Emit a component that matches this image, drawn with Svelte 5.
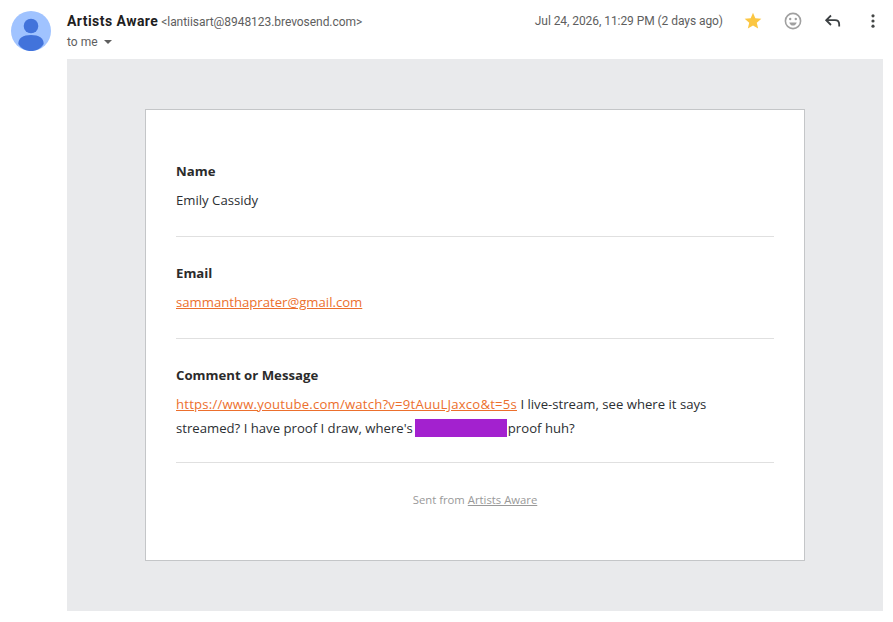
<script>
  const avatarBg = '#a0c3ff';
</script>

<div class="page">
  <header class="head">
    <svg class="avatar" width="40" height="40" viewBox="0 0 40 40" aria-hidden="true">
      <circle cx="20" cy="20" r="20" fill={avatarBg} />
      <circle cx="20" cy="15" r="7.3" fill="#4273db" />
      <path d="M7.3 33 C7.3 27 12 24 20 24 C28 24 32.7 27 32.7 33 C30 37.5 25 40 20 40 C15 40 10 37.5 7.3 33 Z" fill="#4273db" />
    </svg>
    <div class="who">
      <div class="from"><span class="name">Artists Aware</span> <span class="addr">&lt;lantiisart@8948123.brevosend.com&gt;</span></div>
      <div class="to">to me <span class="caret"></span></div>
    </div>
    <div class="date">Jul 24, 2026, 11:29 PM (2 days ago)</div>
    <div class="tools">
      <svg width="20" height="20" viewBox="0 0 24 24" aria-hidden="true"><path fill="#fbc02d" fill-opacity="0.9" d="M12 17.27 18.18 21l-1.64-7.03L22 9.24l-7.19-.61L12 2 9.19 8.63 2 9.24l5.46 4.73L5.82 21z"/></svg>
      <svg width="20" height="20" viewBox="0 0 20 20" aria-hidden="true">
        <circle cx="10" cy="10" r="7.6" fill="none" stroke="#a0a0a0" stroke-width="1.6"/>
        <circle cx="7.2" cy="8" r="1.2" fill="#a0a0a0"/>
        <circle cx="12.8" cy="8" r="1.2" fill="#a0a0a0"/>
        <path d="M6.3 11.4h7.4c-.5 2-1.9 3.1-3.7 3.1s-3.2-1.1-3.7-3.1z" fill="#a0a0a0"/>
      </svg>
      <svg width="20" height="20" viewBox="0 0 20 20" aria-hidden="true">
        <path d="M8 4.5 3.2 9.2 8 14 M3.4 9.2H12c2.6 0 4.2 1.7 4.2 4.3v2" fill="none" stroke="#3c4043" stroke-width="1.8"/>
      </svg>
      <svg width="20" height="20" viewBox="0 0 20 20" aria-hidden="true">
        <circle cx="10" cy="4.8" r="1.6" fill="#444746"/>
        <circle cx="10" cy="10" r="1.6" fill="#444746"/>
        <circle cx="10" cy="15.2" r="1.6" fill="#444746"/>
      </svg>
    </div>
  </header>

  <main class="panel">
    <div class="card">
      <section class="field">
        <h3>Name</h3>
        <p>Emily Cassidy</p>
      </section>
      <section class="field">
        <h3>Email</h3>
        <p><a href="#top">sammanthaprater@gmail.com</a></p>
      </section>
      <section class="field">
        <h3>Comment or Message</h3>
        <p class="msg"><a href="#top">https://www.youtube.com/watch?v=9tAuuLJaxco&amp;t=5s</a> I live-stream, see where it says streamed? I have proof I draw, where's<span class="redact"></span>proof huh?</p>
      </section>
      <footer class="foot">Sent from <a href="#top">Artists Aware</a></footer>
    </div>
  </main>
</div>

<style>
  :global(body) {
    margin: 0;
    background: #fff;
  }
  .page {
    width: 893px;
    height: 622px;
    overflow: hidden;
    font-family: Roboto, "Liberation Sans", sans-serif;
  }
  .head {
    display: flex;
    height: 59px;
    box-sizing: border-box;
    padding: 11px 10px 0 11px;
  }
  .avatar {
    flex: none;
    margin-right: 16px;
  }
  .who {
    flex: 1;
    min-width: 0;
  }
  .from {
    font-size: 12px;
    line-height: 20px;
    color: #5e5e5e;
    letter-spacing: -0.05px;
  }
  .name {
    font-size: 14px;
    font-weight: 700;
    letter-spacing: 0.45px;
    color: #1f1f1f;
  }
  .to {
    font-size: 12px;
    line-height: 20px;
    color: #5e5e5e;
  }
  .caret {
    display: inline-block;
    width: 0;
    height: 0;
    margin-left: 3px;
    vertical-align: 2px;
    border: 4px solid transparent;
    border-top: 4px solid #5e5e5e;
    border-bottom: 0;
  }
  .date {
    font-size: 12px;
    line-height: 20px;
    color: #5e5e5e;
    letter-spacing: -0.06px;
    margin-right: 20px;
  }
  .tools {
    display: flex;
    gap: 20px;
    height: 20px;
  }
  .panel {
    margin-left: 67px;
    width: 816px;
    height: 552px;
    box-sizing: border-box;
    background: #e9eaec;
    padding: 50px 0 0 78px;
  }
  .card {
    width: 660px;
    height: 452px;
    box-sizing: border-box;
    background: #fff;
    border: 1px solid #c4c6c8;
    padding: 30px;
    font-family: "Open Sans", "Noto Sans", sans-serif;
    font-size: 14px;
    color: #2b2e32;
  }
  .field {
    padding: 21px 0 24px;
    border-bottom: 1px solid #e0e0e0;
    box-sizing: border-box;
  }
  .field + .field {
    padding-top: 26px;
  }
  .field:last-of-type {
    padding-bottom: 22px;
  }
  h3 {
    margin: 0;
    font-size: 13.2px;
    line-height: 20px;
    font-weight: 700;
    color: #2b2b2b;
  }
  p {
    margin: 7px 0 0;
    line-height: 24px;
    font-size: 13.15px;
  }
  .msg {
    padding-right: 20px;
  }
  .msg a {
    letter-spacing: 0.2px;
  }
  a {
    color: #ec6f2d;
    text-decoration: underline;
  }
  .redact {
    display: inline-block;
    width: 92px;
    height: 18px;
    margin: 0 1px 0 2px;
    vertical-align: -4px;
    background: #a321cf;
  }
  .foot {
    padding-top: 28px;
    text-align: center;
    font-size: 11.3px;
    line-height: 18px;
    color: #999;
  }
  .foot a {
    color: #999;
  }
</style>
